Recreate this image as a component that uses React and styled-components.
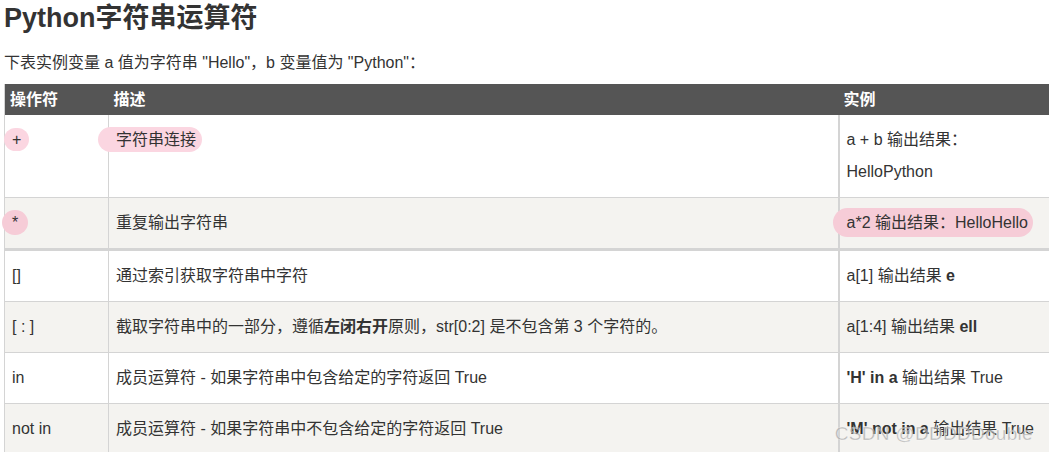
import styled, { createGlobalStyle } from "styled-components";

const GlobalStyle = createGlobalStyle`
  html, body {
    margin: 0;
    padding: 0;
    background: #fff;
    overflow: hidden;
  }
  body {
    font-family: "Liberation Sans", Arial, "Noto Sans CJK SC", sans-serif;
    color: #333;
  }
`;

const Page = styled.div`
  position: relative;
  width: 1049px;
  height: 452px;
  padding-left: 4px;
  box-sizing: border-box;
  overflow: hidden;
`;

const Title = styled.h2`
  margin: 0;
  padding-top: 1px;
  font-size: 27px;
  line-height: 34px;
  font-weight: bold;
  color: #333;
`;

const Intro = styled.p`
  margin: 15px 0 0;
  font-size: 16px;
  line-height: 26px;
`;

const Table = styled.table`
  margin-top: 8px;
  width: 1060px;
  border-collapse: collapse;
  table-layout: fixed;
  border-left: 1px solid #d4d4d4;
  font-size: 16px;
`;

const Head = styled.th`
  background: #555;
  color: #fff;
  font-size: 16px;
  font-weight: bold;
  text-align: left;
  height: 31px;
  padding: 0 5px;
  line-height: 31px;
`;

const Row = styled.tr`
  background: ${(p) => (p.$alt ? "#f4f3f0" : "#fff")};
  border-bottom: ${(p) => (p.$thick ? 3 : 1)}px solid #d4d4d4;
`;

const Cell = styled.td`
  padding: 12px 7px;
  line-height: 26px;
  vertical-align: top;
  border-right: ${(p) => (p.$wide ? 2 : 1)}px solid #d4d4d4;
  color: #333;
  white-space: nowrap;
`;

const Line = styled.div`
  & + & {
    margin-top: 6px;
  }
`;

const Mark = styled.span`
  position: relative;
  z-index: 1;
  padding: ${(p) => p.$pad};
  margin: ${(p) => p.$margin};
  border-radius: 16px;
  background: ${(p) => (p.$alt ? "#f6ccd7" : "#fbd6e1")};
`;

const Watermark = styled.div`
  position: absolute;
  right: 16px;
  bottom: 7px;
  font-size: 19px;
  letter-spacing: 0.3px;
  color: rgba(160, 160, 160, 0.7);
  -webkit-text-stroke: 0.4px rgba(255, 255, 255, 0.6);
  pointer-events: none;
`;

const rows = [
  { op: "[]", desc: "通过索引获取字符串中字符", ex: <>a[1] 输出结果 <b>e</b></> },
  {
    op: "[ : ]",
    alt: true,
    desc: (
      <>
        截取字符串中的一部分，遵循<b>左闭右开</b>原则，str[0:2] 是不包含第 3 个字符的。
      </>
    ),
    ex: <>a[1:4] 输出结果 <b>ell</b></>,
  },
  { op: "in", desc: "成员运算符 - 如果字符串中包含给定的字符返回 True", ex: <><b>'H' in a</b> 输出结果 True</> },
  {
    op: "not in",
    alt: true,
    desc: "成员运算符 - 如果字符串中不包含给定的字符返回 True",
    ex: <><b>'M' not in a</b> 输出结果 True</>,
  },
];

const App = () => {
  return (
    <Page>
      <GlobalStyle />
      <Title>Python字符串运算符</Title>
      <Intro>下表实例变量 a 值为字符串 "Hello"，b 变量值为 "Python"：</Intro>
      <Table>
        <colgroup>
          <col style={{ width: 104 }} />
          <col style={{ width: 730 }} />
          <col />
        </colgroup>
        <thead>
          <tr>
            <Head>操作符</Head>
            <Head>描述</Head>
            <Head>实例</Head>
          </tr>
        </thead>
        <tbody>
          <Row>
            <Cell>
              <Mark $pad="3px 8px" $margin="0 -8px">+</Mark>
            </Cell>
            <Cell $wide>
              <Mark $pad="4px 6px 4px 18px" $margin="0 -6px 0 -18px">字符串连接</Mark>
            </Cell>
            <Cell>
              <Line>a + b 输出结果：</Line>
              <Line>HelloPython</Line>
            </Cell>
          </Row>
          <Row $alt $thick>
            <Cell>
              <Mark $alt $pad="4px 10px" $margin="0 -10px">*</Mark>
            </Cell>
            <Cell $wide>重复输出字符串</Cell>
            <Cell>
              <Mark $alt $pad="6px 5px 6px 14px" $margin="0 -5px 0 -14px">
                a*2 输出结果：HelloHello
              </Mark>
            </Cell>
          </Row>
          {rows.map((r) => (
            <Row key={r.op} $alt={r.alt}>
              <Cell>{r.op}</Cell>
              <Cell $wide>{r.desc}</Cell>
              <Cell>{r.ex}</Cell>
            </Row>
          ))}
        </tbody>
      </Table>
      <Watermark>CSDN @DDDDDouble</Watermark>
    </Page>
  );
};

export default App;
